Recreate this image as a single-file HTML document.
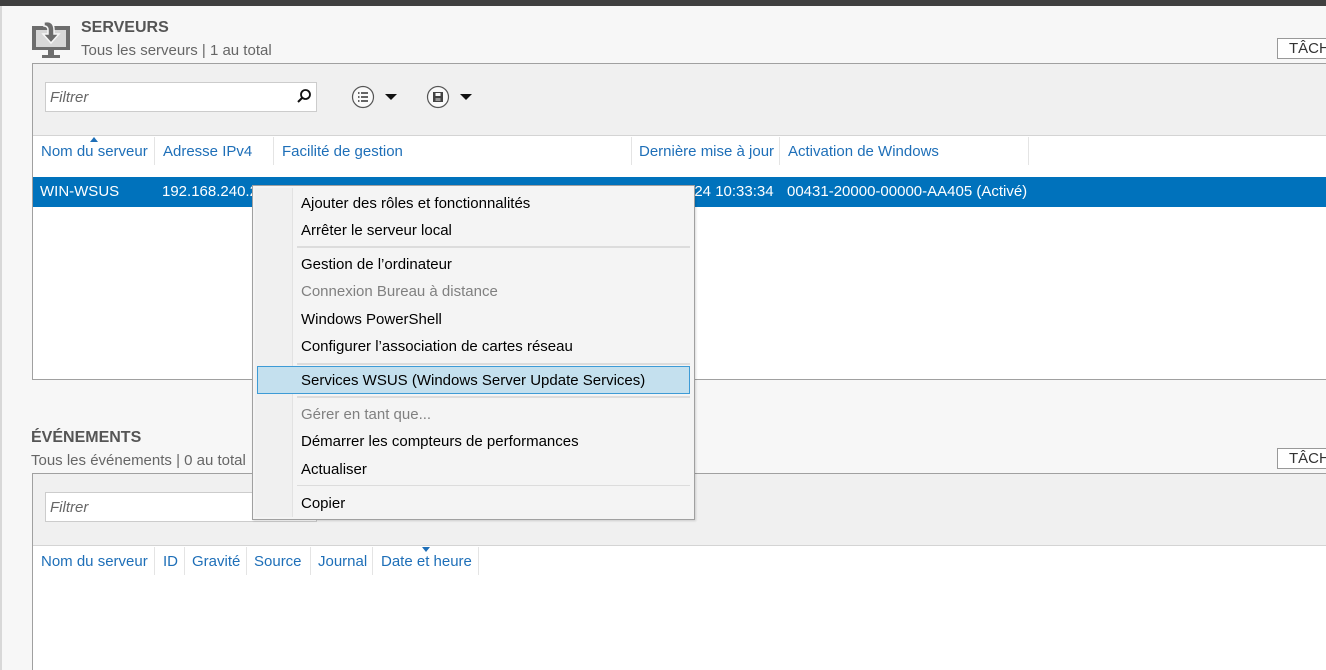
<!DOCTYPE html>
<html style="overflow:hidden;height:670px"><head><meta charset="utf-8"><style>
*{margin:0;padding:0;box-sizing:border-box}
body{width:1326px;height:670px;overflow:hidden;background:#f7f7f7;font-family:"Liberation Sans",sans-serif;font-size:15px;position:relative;color:#000}
.a{position:absolute;white-space:nowrap}
.blue{color:#1e6fb8}
.sep{position:absolute;width:1px;background:#e4e4e4}
.mi{position:absolute;left:48px;font-size:15px}
.ms{position:absolute;left:44px;right:4px;height:2px;background:#dcdcdc}
</style></head><body>
<div class="a" style="left:0;top:0;width:1326px;height:6px;background:#404040"></div>
<div class="a" style="left:0;top:6px;width:2px;height:664px;background:#d8d8d8"></div>
<svg class="a" style="left:30px;top:18px" width="42" height="42" viewBox="0 0 42 42">
<rect x="2" y="8" width="38" height="24" fill="#6d6d6d"/><rect x="6" y="12" width="30" height="17" fill="#d8d8d8"/>
<rect x="18" y="32" width="6" height="5" fill="#6d6d6d"/><rect x="12" y="37" width="18" height="3" fill="#6d6d6d"/>
<path d="M14 4 Q24 2 24 12 L24 16 L29 16 L21 25 L13 16 L18 16 L18 12 Q18 8 14 8 Z" fill="#6d6d6d" stroke="#f7f7f7" stroke-width="1.5"/>
</svg>
<div class="a" style="left:81px;top:19px;font-size:16px;font-weight:bold;color:#555">SERVEURS</div>
<div class="a" style="left:81px;top:42px;color:#666">Tous les serveurs | 1 au total</div>
<div class="a" style="left:1277px;top:38px;width:60px;height:21px;border:1px solid #999;background:#fff;padding:1px 0 0 11px;color:#333">TÂCH</div>
<div class="a" style="left:32px;top:63px;width:1300px;height:317px;border:1px solid #a0a0a0;background:#fff"></div>
<div class="a" style="left:33px;top:64px;width:1293px;height:72px;background:#f0f0f0;border-bottom:1px solid #d4d4d4"></div>
<div class="a" style="left:45px;top:82px;width:272px;height:30px;border:1px solid #ccc;background:#fff"></div>
<div class="a" style="left:50px;top:89px;font-style:italic;color:#666">Filtrer</div>
<svg class="a" style="left:296px;top:88px" width="16" height="16"><circle cx="9.5" cy="6.5" r="4.5" fill="none" stroke="#111" stroke-width="1.8"/><path d="M6.5 9.5 L2 14" stroke="#111" stroke-width="2"/></svg>
<svg class="a" style="left:351px;top:85px" width="50" height="24"><circle cx="12" cy="12" r="10.5" fill="#fafafa" stroke="#555" stroke-width="1.2"/><path d="M7 8h1.5M10 8h7M7 12h1.5M10 12h7M7 16h1.5M10 16h7" stroke="#333" stroke-width="1.6"/><path d="M34 9 h12 l-6 6z" fill="#111"/></svg>
<svg class="a" style="left:426px;top:85px" width="50" height="24"><circle cx="12" cy="12" r="10.5" fill="#fafafa" stroke="#555" stroke-width="1.2"/><rect x="7" y="7" width="10" height="10" fill="#444"/><rect x="9.5" y="8" width="5" height="3" fill="#fafafa"/><rect x="9.5" y="13" width="5" height="3" fill="#999"/><path d="M34 9 h12 l-6 6z" fill="#111"/></svg>
<div class="a" style="left:90px;top:137px;width:0;height:0;border-left:4px solid transparent;border-right:4px solid transparent;border-bottom:5px solid #1e6fb8"></div>
<div class="a blue" style="left:41px;top:143px">Nom du serveur</div>
<div class="a blue" style="left:163px;top:143px">Adresse IPv4</div>
<div class="a blue" style="left:282px;top:143px">Facilité de gestion</div>
<div class="a blue" style="left:639px;top:143px">Dernière mise à jour</div>
<div class="a blue" style="left:788px;top:143px">Activation de Windows</div>
<div class="sep" style="left:154px;top:137px;height:28px"></div>
<div class="sep" style="left:273px;top:137px;height:28px"></div>
<div class="sep" style="left:631px;top:137px;height:28px"></div>
<div class="sep" style="left:779px;top:137px;height:28px"></div>
<div class="sep" style="left:1028px;top:137px;height:28px"></div>
<div class="a" style="left:33px;top:177px;width:1293px;height:30px;background:#0072bc"></div>
<div class="a" style="left:40px;top:183px;color:#fff">WIN-WSUS</div>
<div class="a" style="left:162px;top:183px;color:#fff">192.168.240.2</div>
<div class="a" style="left:686px;top:183px;color:#fff">024 10:33:34</div>
<div class="a" style="left:787px;top:183px;color:#fff">00431-20000-00000-AA405 (Activé)</div>
<div class="a" style="left:31px;top:429px;font-size:16px;font-weight:bold;color:#555">ÉVÉNEMENTS</div>
<div class="a" style="left:31px;top:452px;color:#666">Tous les événements | 0 au total</div>
<div class="a" style="left:1277px;top:448px;width:60px;height:21px;border:1px solid #999;background:#fff;padding:1px 0 0 11px;color:#333">TÂCH</div>
<div class="a" style="left:32px;top:473px;width:1300px;height:197px;border:1px solid #a0a0a0;border-bottom:none;background:#fff"></div>
<div class="a" style="left:33px;top:474px;width:1293px;height:72px;background:#f0f0f0;border-bottom:1px solid #d4d4d4"></div>
<div class="a" style="left:45px;top:492px;width:272px;height:30px;border:1px solid #ccc;background:#fff"></div>
<div class="a" style="left:50px;top:499px;font-style:italic;color:#666">Filtrer</div>
<div class="a" style="left:422px;top:547px;width:0;height:0;border-left:4px solid transparent;border-right:4px solid transparent;border-top:5px solid #1e6fb8"></div>
<div class="a blue" style="left:41px;top:553px">Nom du serveur</div>
<div class="a blue" style="left:163px;top:553px">ID</div>
<div class="a blue" style="left:192px;top:553px">Gravité</div>
<div class="a blue" style="left:254px;top:553px">Source</div>
<div class="a blue" style="left:318px;top:553px">Journal</div>
<div class="a blue" style="left:381px;top:553px">Date et heure</div>
<div class="sep" style="left:154px;top:547px;height:28px"></div>
<div class="sep" style="left:184px;top:547px;height:28px"></div>
<div class="sep" style="left:246px;top:547px;height:28px"></div>
<div class="sep" style="left:310px;top:547px;height:28px"></div>
<div class="sep" style="left:372px;top:547px;height:28px"></div>
<div class="sep" style="left:478px;top:547px;height:28px"></div>
<div class="a" style="left:252px;top:185px;width:443px;height:335px;background:#f4f4f4;border:1px solid #a0a0a0;box-shadow:1px 1px 2px rgba(0,0,0,.15)">
<div class="a" style="left:2px;top:2px;width:38px;height:329px;background:#f0f0f0;border-right:1px solid #e2e2e2"></div>
<div class="mi" style="top:9px">Ajouter des rôles et fonctionnalités</div>
<div class="mi" style="top:36px">Arrêter le serveur local</div>
<div class="ms" style="top:60px"></div>
<div class="mi" style="top:70px">Gestion de l’ordinateur</div>
<div class="mi" style="top:97px;color:#808080">Connexion Bureau à distance</div>
<div class="mi" style="top:125px">Windows PowerShell</div>
<div class="mi" style="top:152px">Configurer l’association de cartes réseau</div>
<div class="ms" style="top:177px"></div>
<div class="a" style="left:4px;top:180px;width:433px;height:28px;background:#c4e0ee;border:1px solid #3d9bd6"></div>
<div class="mi" style="top:186px">Services WSUS (Windows Server Update Services)</div>
<div class="ms" style="top:210px"></div>
<div class="mi" style="top:220px;color:#808080">Gérer en tant que...</div>
<div class="mi" style="top:247px">Démarrer les compteurs de performances</div>
<div class="mi" style="top:275px">Actualiser</div>
<div class="ms" style="top:299px;height:1px"></div>
<div class="mi" style="top:309px">Copier</div>
</div>
</body></html>
